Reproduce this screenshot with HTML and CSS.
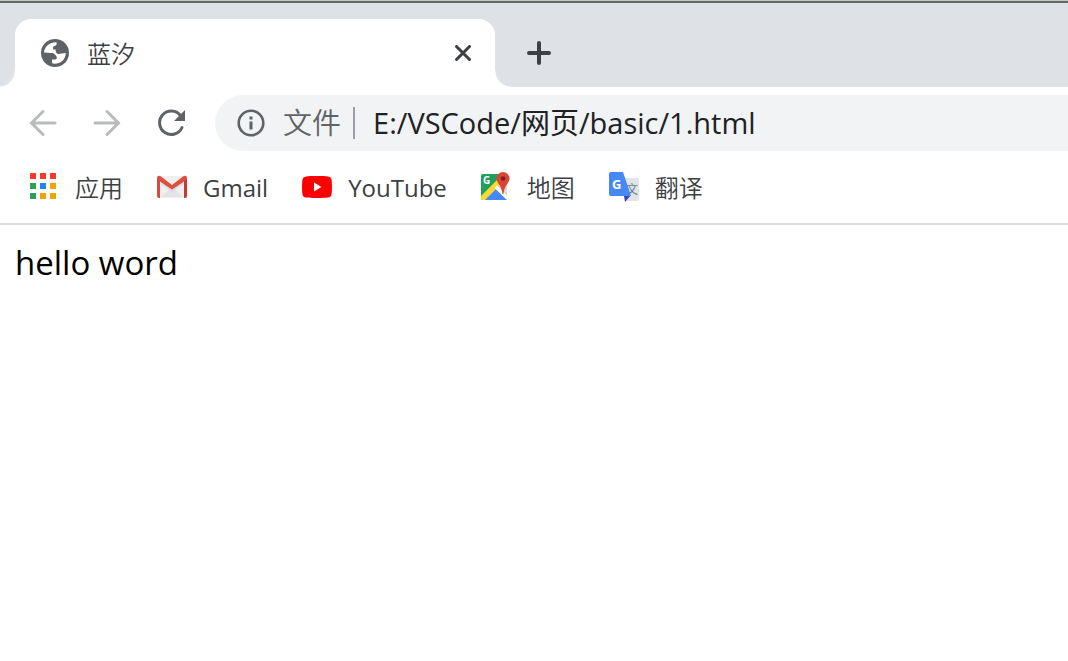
FILE: index.html
```
<!DOCTYPE html>
<html lang="zh-CN">
<head>
  <meta charset="UTF-8">
  <meta name="viewport" content="width=device-width, initial-scale=1.0">
  <title>蓝汐</title>
  <link rel="stylesheet" href="styles.css">
</head>
<body>
  <header class="browser">
    <div class="tab-strip">
      <div class="tab">
        <svg class="tab-icon" viewBox="0 0 28 28">
          <circle cx="14" cy="14" r="14" fill="#5f6368"/>
          <path d="M3 13.500C3.500 7.500 8.500 3 15.500 3.200c.5 1.800 0 3.300-2 3.800-1.700.4-1.500 2-1.500 3.500h2.500c0 3 1.500 4.500 3 4.500l7.300-1C24.500 20.500 20 25 13 24.800l-2-.8v-3.500h3c1.500 0 2.500-1.500 1.500-3C14.500 16 13.500 14 10 14z" fill="#fff"/>
        </svg>
        <span class="tab-title">蓝汐</span>
        <button class="icon-button" type="button" aria-label="关闭">
          <svg width="16" height="16" viewBox="0 0 16 16"><path d="M1.500 1.500l13 13M14.500 1.500l-13 13"/></svg>
        </button>
      </div>
      <button class="icon-button new-tab" type="button" aria-label="新标签页">
        <svg width="24" height="24" viewBox="0 0 24 24"><path d="M12 2v20M2 12h20"/></svg>
      </button>
    </div>

    <div class="toolbar">
      <button class="nav-button" type="button" aria-label="后退" disabled>
        <svg width="28" height="28" viewBox="0 0 28 28"><path d="M26 14H3M14 2.500L2.500 14 14 25.500"/></svg>
      </button>
      <button class="nav-button" type="button" aria-label="前进" disabled>
        <svg width="28" height="28" viewBox="0 0 28 28"><path d="M2 14h23M14 2.500L25.500 14 14 25.500"/></svg>
      </button>
      <button class="nav-button" type="button" aria-label="重新加载">
        <svg width="28" height="28" viewBox="0 0 28 28"><path d="M25 18.500A11.700 11.700 0 1 1 23.500 6.500"/><path d="M28 1v11H17z" fill="#5f6368" stroke="none"/></svg>
      </button>
      <div class="address-bar">
        <svg class="info-icon" viewBox="0 0 28 28">
          <circle cx="14" cy="14" r="12.300" fill="none" stroke="#5f6368" stroke-width="2.600"/>
          <path d="M12.500 7.500h3v3h-3zM12.500 12.500h3v8h-3z" fill="#5f6368"/>
        </svg>
        <label class="scheme" for="url">文件</label>
        <input class="url" id="url" type="text" value="E:/VSCode/网页/basic/1.html" spellcheck="false">
      </div>
    </div>

    <nav class="bookmarks">
      <a class="bookmark" href="#">
        <svg class="bookmark-icon" viewBox="0 0 30 30">
          <path d="M1 1h6v6H1zM11 1h6v6h-6zM21 1h6v6h-6z" fill="#f9372f"/>
          <path d="M1 11h6v6H1zM1 21h6v6H1z" fill="#2c9f59"/>
          <path d="M11 11h6v6h-6z" fill="#1e88f5"/>
          <path d="M21 11h6v6h-6zM11 21h6v6h-6zM21 21h6v6h-6z" fill="#f3a300"/>
        </svg>
        <span class="cjk">应用</span>
      </a>
      <a class="bookmark" href="#">
        <svg class="bookmark-icon" viewBox="0 0 30 30">
          <rect x="1" y="4" width="28" height="22" rx="2" fill="#efefef"/>
          <path d="M4 25l11-10 11 10z" fill="#e4e4e4"/>
          <path d="M4 7l11 10L26 7v5L15 20 4 12z" fill="#dadada"/>
          <path d="M0 6v18a2 2 0 0 0 2 2h1V8z" fill="#d54b3d"/>
          <path d="M30 6v18a2 2 0 0 1-2 2h-1V8z" fill="#c83a31"/>
          <path d="M0 6c0-2 2-3 4-1.600L15 13 26 4.400C28 3 30 4 30 6c0 1-.4 1.700-1.200 2.300L15 17.500 1.200 8.300C.4 7.700 0 7 0 6z" fill="#dd4e41"/>
        </svg>
        <span>Gmail</span>
      </a>
      <a class="bookmark" href="#">
        <svg class="bookmark-icon" viewBox="0 0 30 30">
          <path d="M4 4.400C8 3.800 22 3.800 26 4.400c2.200.3 3.300 1.400 3.600 3.600.5 4 .5 10 0 14-.3 2.200-1.400 3.300-3.600 3.600-4 .6-18 .6-22 0C1.800 25.300.7 24.200.4 22c-.5-4-.5-10 0-14C.7 5.800 1.800 4.700 4 4.400z" fill="#f00"/>
          <path d="M12 10.500v9l7.500-4.500z" fill="#fff"/>
        </svg>
        <span>YouTube</span>
      </a>
      <a class="bookmark" href="#">
        <svg class="bookmark-icon" viewBox="0 0 30 30">
          <clipPath id="map-shape"><rect x="0" y="2" width="26" height="26" rx="2"/></clipPath>
          <g clip-path="url(#map-shape)">
            <path d="M0 2h26v26H0z" fill="#1fa05f"/>
            <path d="M13 15L26 2v26z" fill="#d9d9d9"/>
            <path d="M1 29l13-13 13 13z" fill="#4688f4"/>
            <path d="M0 28v-4L18 6l3 5L3 29z" fill="#fdd835"/>
            <path d="M13.500 16l2.500-2.500L28 26v4z" fill="#fff"/>
          </g>
          <text class="logo-letter" x="2" y="12" font-size="10">G</text>
          <path d="M22 0a6.500 6.500 0 0 1 6.500 6.500c0 4.500-5 6-6 15.500h-1c-1-9.500-6-11-6-15.500A6.500 6.500 0 0 1 22 0z" fill="#db4437"/>
          <circle cx="22" cy="6.500" r="2.300" fill="#7b231e"/>
        </svg>
        <span class="cjk">地图</span>
      </a>
      <a class="bookmark" href="#">
        <svg class="bookmark-icon" viewBox="0 0 30 30">
          <path d="M12 6h16a2 2 0 0 1 2 2v19a2 2 0 0 1-2 2H17z" fill="#e2e3e4"/>
          <text class="logo-word" x="17" y="22" font-size="12">文</text>
          <path d="M15 24l7-1-6 7z" fill="#3446b5"/>
          <path d="M2 0h12l8 24H2a2 2 0 0 1-2-2V2a2 2 0 0 1 2-2z" fill="#4688f4"/>
          <text class="logo-letter" x="3" y="17" font-size="13">G</text>
        </svg>
        <span class="cjk">翻译</span>
      </a>
    </nav>
  </header>

  <main class="page">hello word</main>
</body>
</html>
```
FILE: styles.css
```
* {
  box-sizing: border-box;
}

body {
  margin: 0;
  background: #fff;
  color: #000;
  font-family: "Open Sans", "Noto Sans CJK SC", sans-serif;
}

button {
  padding: 0;
  border: 0;
  background: none;
}

svg {
  display: block;
  flex: none;
}

.browser {
  border-top: 1px solid #c6c8c6;
  border-bottom: 2px solid #dadbdc;
}

.tab-strip {
  display: flex;
  height: 86px;
  padding: 16px 15px 0;
  border-top: 2px solid #666;
  background: #dee1e6;
}

.tab {
  position: relative;
  display: flex;
  align-items: center;
  width: 480px;
  padding: 0 24px 0 26px;
  border-radius: 16px 16px 0 0;
  background: #fff;
}

/* curved feet on both sides of the active tab */
.tab::before,
.tab::after {
  content: "";
  position: absolute;
  bottom: 0;
  width: 16px;
  height: 16px;
}

.tab::before {
  right: 100%;
  background: radial-gradient(circle at 0 0, #dee1e6 15px, #fff 16px);
}

.tab::after {
  left: 100%;
  background: radial-gradient(circle at 100% 0, #dee1e6 15px, #fff 16px);
}

.tab-icon {
  width: 28px;
  height: 28px;
}

.tab-title {
  flex: 1;
  margin-left: 18px;
  padding-top: 2px;
  color: #3c4043;
  font-size: 24px;
  font-weight: 350;
  line-height: 32px;
}

.icon-button svg {
  fill: none;
  stroke: #3c4043;
  stroke-width: 3;
  stroke-linecap: round;
}

.new-tab {
  margin-left: 32px;
}

.new-tab svg {
  stroke-width: 4;
}

.toolbar {
  display: flex;
  align-items: center;
  gap: 36px;
  height: 72px;
  padding-left: 29px;
}

.nav-button svg {
  fill: none;
  stroke: #5f6368;
  stroke-width: 3;
  stroke-linecap: round;
}

.nav-button:disabled svg {
  stroke: #babbbd;
}

.address-bar {
  display: flex;
  flex: 1;
  align-items: center;
  height: 56px;
  margin-left: -6px;
  padding-left: 22px;
  border-radius: 28px 0 0 28px;
  background: #f1f3f4;
  font-size: 29px;
  line-height: 32px;
}

.info-icon {
  width: 28px;
  height: 28px;
}

.scheme {
  margin: 0 12px 0 18px;
  color: #5f6368;
  font-weight: 350;
}

.url {
  flex: 1;
  min-width: 0;
  height: 32px;
  padding: 0 0 0 18px;
  border: 0;
  border-left: 2px solid #9aa0a6;
  outline: 0;
  background: none;
  color: #202124;
  font: inherit;
}

.bookmarks {
  display: flex;
  gap: 34px;
  height: 64px;
  padding: 13px 29px 0;
}

.bookmark {
  display: flex;
  align-items: flex-start;
  gap: 16px;
  color: #3c4043;
  font-size: 24px;
  line-height: 32px;
  text-decoration: none;
  white-space: nowrap;
}

.bookmark-icon {
  width: 30px;
  height: 30px;
}

.cjk {
  font-weight: 350;
}

.logo-letter {
  fill: #fff;
  font-family: "Open Sans", sans-serif;
  font-weight: 700;
}

.logo-word {
  fill: #607d8b;
  font-family: "Noto Sans CJK SC", sans-serif;
}

.page {
  padding: 14px 15px;
  font-size: 33px;
  line-height: 48px;
}
```
